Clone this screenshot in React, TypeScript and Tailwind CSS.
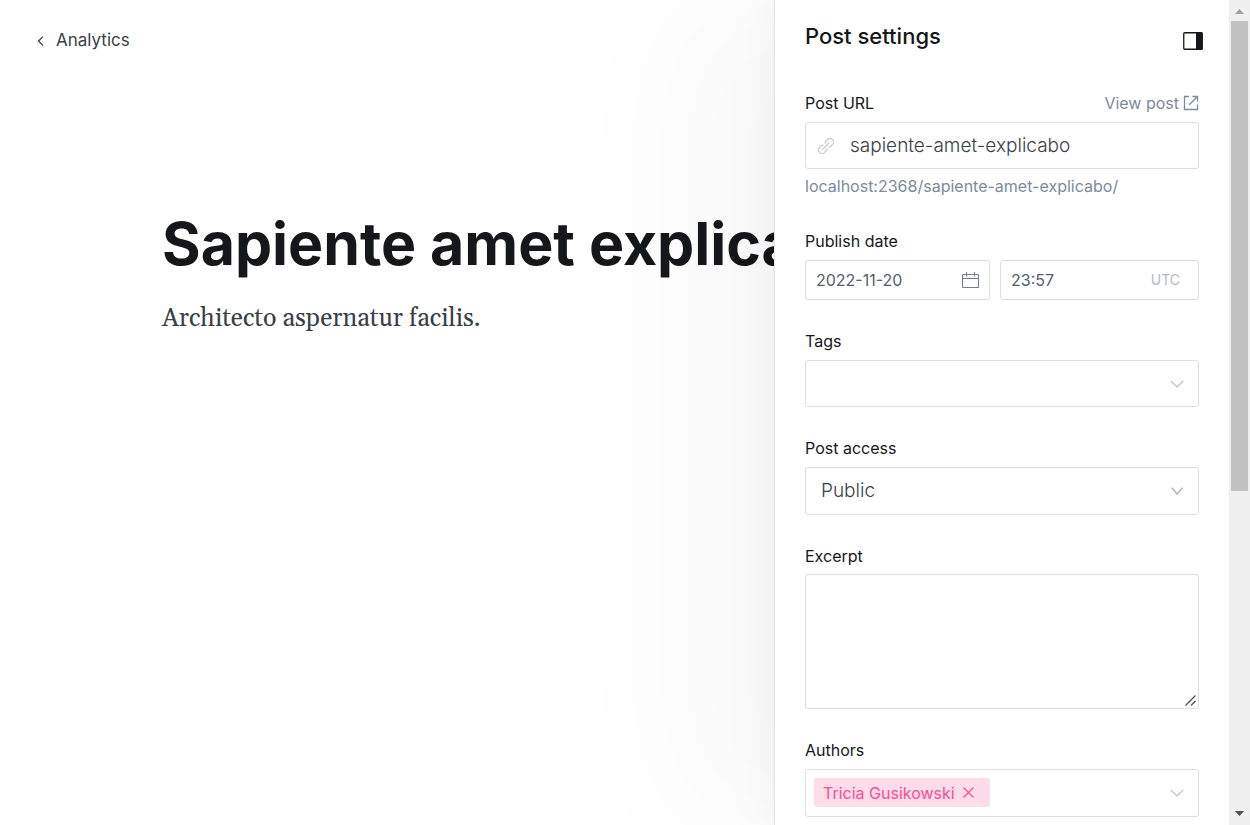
import React from "react";

const label = "block text-base leading-6 text-[#15171a]";
const box = "rounded-[3px] border border-[#dddedf] bg-white";

function LinkIcon() {
  return (
    <svg className="size-4 shrink-0" viewBox="0 0 24 24" fill="none" stroke="#c8cacd" strokeWidth="1.8" strokeLinecap="round" strokeLinejoin="round" aria-hidden="true">
      <path d="M7.500 16.500l9-9" />
      <path d="M13.200 16.300a3.200 3.200 0 0 1-.9 2.900l-3 3a4.400 4.400 0 0 1-6.300 0l-1.200-1.300a4.400 4.400 0 0 1 0-6.200l3-3.100a3.200 3.200 0 0 1 2.900-.9" />
      <path d="M10.800 7.700a3.200 3.200 0 0 1 .9-2.900l3-3a4.400 4.400 0 0 1 6.300 0l1.200 1.300a4.400 4.400 0 0 1 0 6.200l-3 3.100a3.200 3.200 0 0 1-2.900.9" />
    </svg>
  );
}

function ExternalIcon() {
  return (
    <svg className="size-4" viewBox="0 0 16 16" fill="none" stroke="#7c8b9a" strokeWidth="1.3" aria-hidden="true">
      <path d="M6 1.500H1.500v13h13V9.500" />
      <path d="M9.500 1.500h5v5M14.300 1.700 6.200 9.800" />
    </svg>
  );
}

function CalendarIcon() {
  return (
    <svg className="h-[18px] w-[17px] shrink-0" viewBox="0 0 17 18" fill="none" stroke="#6f8093" strokeWidth="1.1" aria-hidden="true">
      <rect x=".5" y="3.500" width="16" height="13" rx=".8" />
      <path d="M.5 7.500h16M4.500 1v4.500M12.500 1v4.500" />
    </svg>
  );
}

function Chevron() {
  return (
    <svg className="h-2 w-[14px] shrink-0" viewBox="0 0 14 8" fill="none" stroke="#b3bcc6" strokeWidth="1.1" aria-hidden="true">
      <path d="m.7 .8 6.300 6.200 6.300-6.200" />
    </svg>
  );
}

function Scrollbar() {
  return (
    <div className="flex w-[21px] shrink-0 flex-col items-center bg-[#f0f0f0]" aria-hidden="true">
      <svg className="h-[21px] w-[17px] shrink-0" viewBox="0 0 17 21">
        <path d="M4 14h9L8.500 9z" fill="#a0a0a0" />
      </svg>
      <div className="h-[57%] w-[17px] bg-[#c1c1c1]" />
      <svg className="mt-auto h-[17px] w-[17px] shrink-0" viewBox="0 0 17 17">
        <path d="M4 3h9L8.500 8z" fill="#505050" />
      </svg>
    </div>
  );
}

export default function App() {
  return (
    <div className="flex h-screen overflow-hidden bg-white font-['Inter',sans-serif] text-[#394047]">
      <main className="min-w-0 flex-1 overflow-hidden">
        <nav className="flex h-20 items-center pl-9">
          <a href="#analytics" className="flex items-center gap-[11px] text-[17px] leading-6">
            <svg className="mt-0.5 h-[10px] w-[9px]" viewBox="0 0 9 10" fill="none" stroke="#394047" strokeWidth="1.3" aria-hidden="true">
              <path d="M7 .6 2.500 5 7 9.400" />
            </svg>
            Analytics
          </a>
        </nav>
        <article className="whitespace-nowrap pt-32 pl-[162px]">
          <h1 className="text-[59px] leading-[72px] font-bold text-[#15171a]">Sapiente amet explicabo</h1>
          <p className="mt-[21px] font-['Georgia','Gelasio','Liberation_Serif',serif] text-[25px] leading-9">Architecto aspernatur facilis.</p>
        </article>
      </main>

      <aside className="relative flex w-[476px] shrink-0 border-l border-[#e3e4e5] bg-white shadow-[-3px_0_2px_rgba(0,0,0,0.005),-7px_0_5px_rgba(0,0,0,0.006),-13px_0_10px_rgba(0,0,0,0.008),-22px_0_18px_rgba(0,0,0,0.01),-42px_0_33px_rgba(0,0,0,0.008),-100px_0_130px_rgba(0,0,0,0.028)]">
        <div className="min-w-0 flex-1 overflow-hidden">
          <header className="flex h-20 items-start justify-between pt-5 pr-[26px] pl-[30px]">
            <h2 className="text-[22px] leading-8 font-medium text-[#15171a]">Post settings</h2>
            <button type="button" aria-label="Toggle settings" className="mt-3">
              <svg className="h-[18px] w-5" viewBox="0 0 20 18" aria-hidden="true">
                <rect x=".75" y=".75" width="18.500" height="16.500" rx="1" fill="none" stroke="#15171a" strokeWidth="1.300" />
                <path d="M13 .5h6q.5 0 .5.500v16q0 .5-.5.500h-6z" fill="#15171a" />
              </svg>
            </button>
          </header>

          <form className="flex flex-col gap-[29px] pt-[11px] pr-[30px] pl-[30px]">
            <div>
              <div className="flex items-center justify-between">
                <label htmlFor="url" className={label}>Post URL</label>
                <a href="#post" className="flex items-center gap-1 text-base leading-6 text-[#7c8b9a]">
                  View post <ExternalIcon />
                </a>
              </div>
              <div className={`${box} mt-[7px] flex h-[47px] items-center gap-4 px-3`}>
                <LinkIcon />
                <input id="url" defaultValue="sapiente-amet-explicabo" className="h-full min-w-0 flex-1 text-[19px] leading-6 font-light outline-none" />
              </div>
              <p className="mt-[5px] pb-0.5 text-base leading-6 text-[#7c8b9a]">localhost:2368/sapiente-amet-explicabo/</p>
            </div>

            <div>
              <label htmlFor="date" className={label}>Publish date</label>
              <div className="mt-[7px] flex gap-[10px]">
                <div className={`${box} flex h-10 w-[185px] items-center px-[10px]`}>
                  <input id="date" defaultValue="2022-11-20" className="min-w-0 flex-1 text-base text-[#54606b] outline-none" />
                  <CalendarIcon />
                </div>
                <div className={`${box} flex h-10 min-w-0 flex-1 items-center pr-[18px] pl-[10px]`}>
                  <input aria-label="Publish time" defaultValue="23:57" className="min-w-0 flex-1 text-base text-[#54606b] outline-none" />
                  <span className="text-sm text-[#b3bcc6]">UTC</span>
                </div>
              </div>
            </div>

            <div>
              <label htmlFor="tags" className={label}>Tags</label>
              <div className={`${box} mt-[7px] flex h-[47px] items-center px-[14px]`}>
                <input id="tags" className="min-w-0 flex-1 outline-none" />
                <Chevron />
              </div>
            </div>

            <div>
              <label htmlFor="access" className={label}>Post access</label>
              <div className={`${box} mt-[7px] grid h-12 items-center`}>
                <select id="access" className="col-start-1 row-start-1 h-full w-full appearance-none px-[15px] text-[19px] font-light outline-none">
                  <option>Public</option>
                </select>
                <svg className="pointer-events-none col-start-1 row-start-1 mr-[15px] h-2 w-3 justify-self-end" viewBox="0 0 12 8" fill="none" stroke="#a3afba" strokeWidth="1.300" aria-hidden="true">
                  <path d="m.6 .6 5.400 6.400L11.400.6" />
                </svg>
              </div>
            </div>

            <div>
              <label htmlFor="excerpt" className={label}>Excerpt</label>
              <div className="relative mt-1.5">
                <textarea id="excerpt" className={`${box} block h-[135px] w-full resize-y p-3 outline-none [&::-webkit-resizer]:bg-transparent`} />
                <svg className="pointer-events-none absolute right-[3px] bottom-[3px] size-[11px]" viewBox="0 0 11 11" fill="none" stroke="#505050" strokeWidth="1.300" aria-hidden="true">
                  <path d="M.5 10.500l10-10M6 10.500l4.500-4.500" />
                </svg>
              </div>
            </div>

            <div>
              <label htmlFor="authors" className={label}>Authors</label>
              <div className={`${box} mt-[7px] flex h-12 items-center pr-[14px] pl-2`}>
                <span className="mt-2 flex h-[29px] items-center gap-2 self-start rounded-[3px] bg-[#ffdcea] pr-4 pl-[9px] text-base text-[#fb4d92]">
                  Tricia Gusikowski
                  <button type="button" aria-label="Remove Tricia Gusikowski">
                    <svg className="size-[11px]" viewBox="0 0 11 11" fill="none" stroke="#fb4d92" strokeWidth="1.200" aria-hidden="true">
                      <path d="m.5 .5 10 10M10.500.5l-10 10" />
                    </svg>
                  </button>
                </span>
                <input id="authors" className="min-w-0 flex-1 outline-none" />
                <Chevron />
              </div>
            </div>
          </form>
        </div>
        <Scrollbar />
      </aside>
    </div>
  );
}
